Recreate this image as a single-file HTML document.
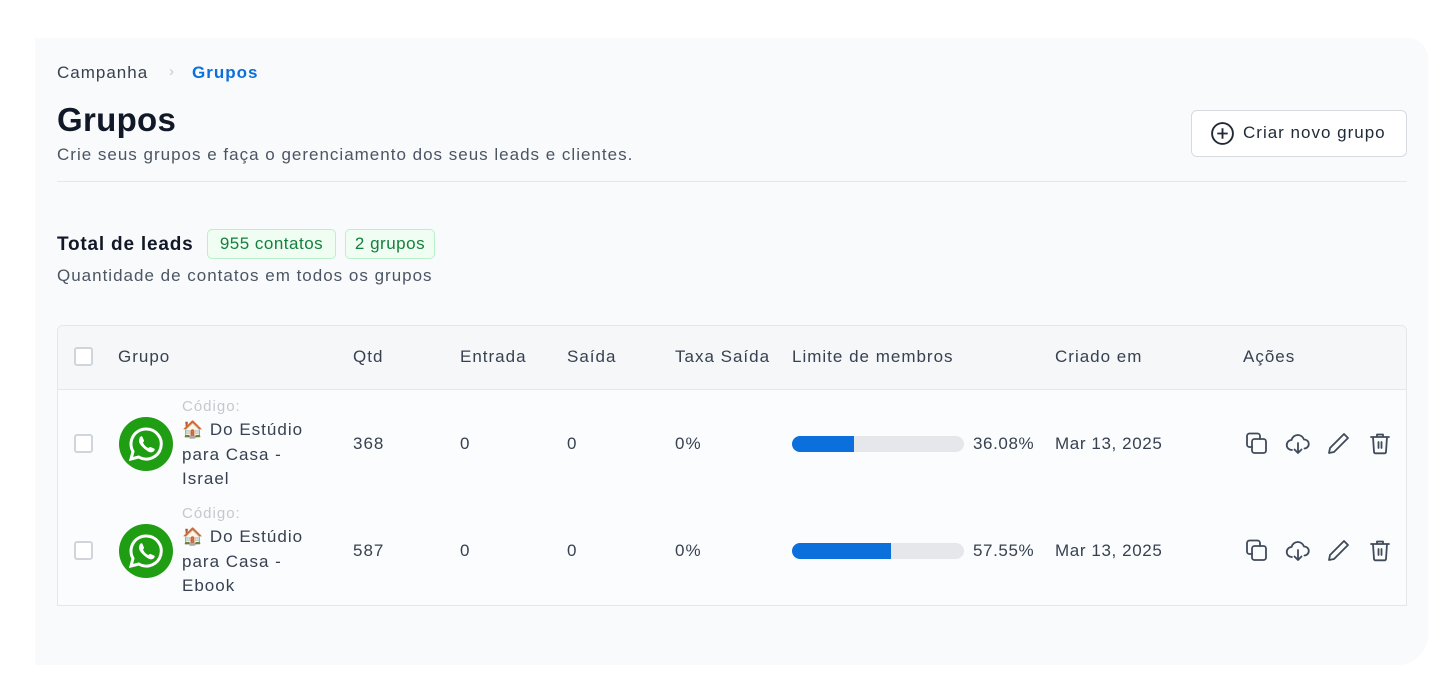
<!DOCTYPE html>
<html><head><meta charset="utf-8"><style>
*{margin:0;padding:0;box-sizing:border-box}
body{width:1440px;height:690px;background:#fff;font-family:"Liberation Sans","Noto Sans CJK JP",sans-serif;color:#1f2937;position:relative;overflow:hidden;letter-spacing:1px}
.card{position:absolute;left:35px;top:38px;width:1393px;height:627px;background:#f9fafc;border-radius:0 20px 30px 0}
.a{position:absolute;white-space:nowrap}
.th{position:absolute;top:347px;font-size:17px;color:#374151}
.td{position:absolute;font-size:17px;color:#374151}
.cb{position:absolute;width:19px;height:19px;border:2px solid #d1d5db;border-radius:3px;background:#fff}
.bar{position:absolute;left:792px;width:172px;height:16px;border-radius:8px;background:#e5e7eb;overflow:hidden}
.bar i{display:block;height:100%;background:#0b6fdc}
.wa{position:absolute;left:119px;width:54px;height:54px;border-radius:50%;background:#1f9d13}
</style></head><body>
<div class="card"></div>
<div class="a" style="left:57px;top:63px;font-size:17px;color:#374151">Campanha</div>
<div class="a" style="left:169px;top:63px;font-size:15px;color:#c4c8ce">›</div>
<div class="a" style="left:192px;top:63px;font-size:17px;color:#0b6fdc;font-weight:bold">Grupos</div>
<div class="a" style="left:57px;top:101px;font-size:33px;font-weight:bold;color:#111827;letter-spacing:0.3px">Grupos</div>
<div class="a" style="left:57px;top:145px;font-size:17px;color:#4b5563">Crie seus grupos e faça o gerenciamento dos seus leads e clientes.</div>
<div class="a" style="left:1191px;top:110px;width:216px;height:47px;border:1px solid #d7dbe0;border-radius:6px;background:#fff"></div>
<svg class="a" style="left:1210px;top:121px" width="25" height="25" viewBox="0 0 24 24" fill="none" stroke="#1f2937" stroke-width="1.8"><circle cx="12" cy="12" r="10"/><path d="M12 7v10M7 12h10"/></svg>
<div class="a" style="left:1243px;top:123px;font-size:17px;color:#1f2937">Criar novo grupo</div>
<div class="a" style="left:57px;top:181px;width:1350px;height:1px;background:#e5e7eb"></div>
<div class="a" style="left:57px;top:234px;font-size:19px;font-weight:bold;color:#111827;letter-spacing:0.8px">Total de leads</div>
<div class="a" style="left:207px;top:229px;width:129px;height:30px;border:1px solid #bbf0c8;border-radius:5px;background:#effdf2;color:#15803d;font-size:17px;text-align:center;line-height:27px;letter-spacing:0.5px">955 contatos</div>
<div class="a" style="left:345px;top:229px;width:90px;height:30px;border:1px solid #bbf0c8;border-radius:5px;background:#effdf2;color:#15803d;font-size:17px;text-align:center;line-height:27px;letter-spacing:0.5px">2 grupos</div>
<div class="a" style="left:57px;top:266px;font-size:17px;color:#4b5563">Quantidade de contatos em todos os grupos</div>
<div class="a" style="left:57px;top:325px;width:1350px;height:281px;border:1px solid #e5e7eb;border-radius:6px 6px 0 0;background:#fbfcfd"></div>
<div class="a" style="left:58px;top:326px;width:1348px;height:64px;background:#f6f7f9;border-bottom:1px solid #e5e7eb;border-radius:6px 6px 0 0"></div>
<div class="cb" style="left:74px;top:347px"></div>
<div class="th" style="left:118px">Grupo</div><div class="th" style="left:353px">Qtd</div><div class="th" style="left:460px">Entrada</div><div class="th" style="left:567px">Saída</div><div class="th" style="left:675px">Taxa Saída</div><div class="th" style="left:792px">Limite de membros</div><div class="th" style="left:1055px">Criado em</div><div class="th" style="left:1243px">Ações</div>

<!-- row1 -->
<div class="cb" style="left:74px;top:434px"></div>
<div class="wa" style="top:417px"><svg width="54" height="54" viewBox="0 0 54 54"><path d="M27 12a15 15 0 0 0-13 22.5L12 42l7.8-2A15 15 0 1 0 27 12z" fill="none" stroke="#fff" stroke-width="3"/><path d="M21 20c1-1 2-1 2.5 0l1.5 3.5c.3.8-1 2-1 2 1 2.5 3 4.5 5.5 5.5 0 0 1.2-1.3 2-1l3.5 1.5c1 .5 1 1.5 0 2.5-2 2-4 2-8-1s-7-6.5-7-9c0-1.5.5-3 1-4z" fill="#fff"/></svg></div>
<div class="a" style="left:182px;top:398px;font-size:15px;color:#c4c8ce">Código:</div>
<div class="a" style="left:182px;top:418px;font-size:17px;line-height:24.5px;color:#374151;white-space:normal;width:125px">🏠 Do Estúdio para Casa - Israel</div>
<div class="td" style="left:353px;top:434px">368</div><div class="td" style="left:460px;top:434px">0</div><div class="td" style="left:567px;top:434px">0</div><div class="td" style="left:675px;top:434px">0%</div>
<div class="bar" style="top:436px"><i style="width:36.08%"></i></div>
<div class="td" style="left:973px;top:434px;letter-spacing:0.6px">36.08%</div><div class="td" style="left:1055px;top:434px;letter-spacing:0.6px">Mar 13, 2025</div>

<!-- row2 -->
<div class="cb" style="left:74px;top:541px"></div>
<div class="wa" style="top:524px"><svg width="54" height="54" viewBox="0 0 54 54"><path d="M27 12a15 15 0 0 0-13 22.5L12 42l7.8-2A15 15 0 1 0 27 12z" fill="none" stroke="#fff" stroke-width="3"/><path d="M21 20c1-1 2-1 2.5 0l1.5 3.5c.3.8-1 2-1 2 1 2.5 3 4.5 5.5 5.5 0 0 1.2-1.3 2-1l3.5 1.5c1 .5 1 1.5 0 2.5-2 2-4 2-8-1s-7-6.5-7-9c0-1.5.5-3 1-4z" fill="#fff"/></svg></div>
<div class="a" style="left:182px;top:505px;font-size:15px;color:#c4c8ce">Código:</div>
<div class="a" style="left:182px;top:525px;font-size:17px;line-height:24.5px;color:#374151;white-space:normal;width:125px">🏠 Do Estúdio para Casa - Ebook</div>
<div class="td" style="left:353px;top:541px">587</div><div class="td" style="left:460px;top:541px">0</div><div class="td" style="left:567px;top:541px">0</div><div class="td" style="left:675px;top:541px">0%</div>
<div class="bar" style="top:543px"><i style="width:57.55%"></i></div>
<div class="td" style="left:973px;top:541px;letter-spacing:0.6px">57.55%</div><div class="td" style="left:1055px;top:541px;letter-spacing:0.6px">Mar 13, 2025</div>

<svg width="0" height="0" style="position:absolute"><defs>
<g id="ic" fill="none" stroke="#3f4a5a" stroke-width="1.8" stroke-linecap="round" stroke-linejoin="round">
<g transform="translate(1244,0)"><rect x="8" y="8" width="14" height="14" rx="2.5"/><path d="M16 8V5a2.5 2.5 0 0 0-2.5-2.5h-8A2.5 2.5 0 0 0 3 5v8.5A2.5 2.5 0 0 0 5.5 16H8"/></g>
<g transform="translate(1285,0)"><path d="M7 19a5 5 0 0 1-.5-10A6.5 6.5 0 0 1 19 8.5a4.5 4.5 0 0 1 .5 9"/><path d="M13 12v10M9.5 18.5L13 22l3.5-3.5"/></g>
<g transform="translate(1326,0)"><path d="M18 3l4 4L8 21l-5 1 1-5z"/></g>
<g transform="translate(1368,0)"><path d="M3 6h18M9 6V3.5h6V6M5 6l1 15a1.5 1.5 0 0 0 1.5 1.3h9A1.5 1.5 0 0 0 18 21l1-15M10.5 11v6M13.5 11v6"/></g>
</g></defs></svg>
<svg class="a" style="left:0;top:431px" width="1440" height="26"><use href="#ic"/></svg>
<svg class="a" style="left:0;top:538px" width="1440" height="26"><use href="#ic"/></svg>
</body></html>
